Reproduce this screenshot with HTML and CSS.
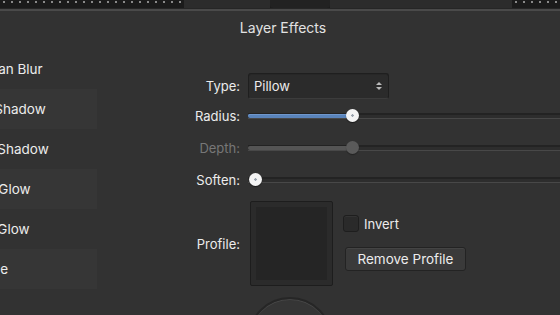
FILE: index.html
```html
<!DOCTYPE html>
<html lang="en">
<head>
  <meta charset="UTF-8">
  <title>Layer Effects</title>
  <link rel="stylesheet" href="styles.css">
</head>
<body>
<div class="topbar">
  <div class="seg dots left"></div>
  <div class="seg plain a"></div>
  <div class="seg tab"></div>
  <div class="seg plain b"></div>
  <div class="seg dots right"></div>
</div>

<div class="panel">
  <div class="title">Layer Effects</div>

  <div class="panel-body">
    <ul class="effects">
      <li class="blur">Gaussian Blur</li>
      <li class="alt outer">Outer Shadow</li>
      <li class="inner">Inner Shadow</li>
      <li class="alt outer-glow">Outer Glow</li>
      <li class="inner">Inner Glow</li>
      <li class="alt">Outline</li>
    </ul>

    <div class="settings">
      <div class="row row-type">
        <label class="lbl">Type:</label>
        <div class="select">
          <span>Pillow</span>
          <span class="arrows"><i class="up"></i><i class="down"></i></span>
        </div>
      </div>

      <div class="row row-slider">
        <label class="lbl">Radius:</label>
        <div class="slider">
          <div class="track"></div>
          <div class="fill blue" style="width: 105px"></div>
          <div class="knob" style="left: 98px"></div>
        </div>
      </div>

      <div class="row row-slider">
        <label class="lbl off">Depth:</label>
        <div class="slider disabled">
          <div class="track"></div>
          <div class="fill" style="width: 105px"></div>
          <div class="knob" style="left: 98px"></div>
        </div>
      </div>

      <div class="row row-slider">
        <label class="lbl">Soften:</label>
        <div class="slider">
          <div class="track"></div>
          <div class="knob" style="left: 1px"></div>
        </div>
      </div>

      <div class="row row-profile">
        <label class="lbl">Profile:</label>
        <div class="profile-ctrl">
          <div class="profile-box"><div class="profile-inner"></div></div>
          <div class="profile-side">
            <div class="check"><span class="box"></span>Invert</div>
            <button class="btn">Remove Profile</button>
          </div>
        </div>
      </div>

      <div class="row row-dial">
        <span></span>
        <div class="dial"></div>
      </div>
    </div>
  </div>
</div>
</body>
</html>
```

FILE: styles.css
```css
* {
  margin: 0;
  padding: 0;
  box-sizing: border-box;
}

html, body {
  width: 560px;
  height: 315px;
  overflow: hidden;
}

body {
  background: #323232;
  color: #ececec;
  font-family: 'Inter', 'Noto Sans', sans-serif;
  font-size: 13px;
}

/* Top strip */
.topbar {
  display: flex;
  height: 9px;
  background: #1c1c1c;
  border-bottom: 1px solid #262626;
}

.seg {
  height: 100%;
}

.dots {
  background-color: #1b1b1b;
  background-image: radial-gradient(circle at 4px 2px, #8a8a8a 0.8px, transparent 1.2px);
  background-size: 8px 8px;
}

.dots.left {
  width: 184px;
}

.dots.right {
  flex: 1;
}

.plain {
  background: #2c2c2c;
}

.plain.a {
  width: 86px;
}

.plain.b {
  width: 182px;
}

.tab {
  width: 60px;
  background: #222;
  border-radius: 0 0 3px 3px;
}

/* Panel */
.panel {
  border-top: 2px solid #4a4a4a;
}

.title {
  height: 38px;
  padding-bottom: 6px;
  display: flex;
  align-items: center;
  justify-content: center;
  font-size: 14px;
  color: #e2e2e2;
  padding-left: 6px;
}

.panel-body {
  display: flex;
}

/* Effect list, clipped at the window edge */
.effects {
  list-style: none;
  width: 97px;
  flex-shrink: 0;
  overflow: hidden;
}

.effects li {
  height: 40px;
  line-height: 40px;
  white-space: nowrap;
  text-indent: -37px;
  font-size: 13.5px;
}

.effects li.blur,
.effects li.outer {
  text-indent: -45px;
}

.effects li.inner {
  text-indent: -39px;
}

.effects li.outer-glow {
  text-indent: -41px;
}

.effects li.alt {
  background: #363636;
}

/* Settings grid */
.settings {
  flex: 1;
  padding-top: 24px;
}

.row {
  display: grid;
  grid-template-columns: 143px 1fr;
  column-gap: 8px;
  align-items: center;
}

.lbl {
  text-align: right;
  font-size: 13px;
  color: #ececec;
}

.lbl.off {
  color: #777;
}

.row-type {
  height: 26px;
}

.row-slider {
  height: 32px;
}

.row-type + .row-slider {
  margin-top: 1px;
}

.select {
  width: 141px;
  height: 26px;
  background: #2b2b2b;
  border: 1px solid #1f1f1f;
  border-bottom-color: #3c3c3c;
  border-radius: 3px;
  box-shadow: inset 0 1px 0 #272727;
  display: flex;
  align-items: center;
  justify-content: space-between;
  padding: 0 6px 0 5px;
  font-size: 13px;
}

.arrows {
  display: flex;
  flex-direction: column;
  gap: 2px;
}

.arrows i {
  width: 0;
  height: 0;
  border-left: 3px solid transparent;
  border-right: 3px solid transparent;
}

.arrows .up {
  border-bottom: 3px solid #bbb;
}

.arrows .down {
  border-top: 3px solid #bbb;
}

/* Sliders */
.slider {
  position: relative;
  height: 14px;
  width: 340px;
}

.track {
  position: absolute;
  left: 0;
  right: 0;
  top: 4px;
  height: 6px;
  background: #2d2d2d;
  border-top: 2px solid #232323;
  border-bottom: 1px solid #484848;
}

.fill {
  position: absolute;
  left: 0;
  top: 5px;
  height: 4px;
  border-radius: 2px;
  background: #555;
}

.fill.blue {
  background: #5a84bb;
  box-shadow: inset 0 1px 0 #6f97cc;
}

.knob {
  position: absolute;
  top: 0;
  width: 13px;
  height: 13px;
  border-radius: 50%;
  background: radial-gradient(circle, #9aa3ad 0 1px, #f4f4f4 1.5px);
  box-shadow: 0 1px 1px rgba(0, 0, 0, 0.5);
}

.slider.disabled .knob {
  background: #5a5a5a;
  box-shadow: 0 1px 1px rgba(0, 0, 0, 0.3);
}

/* Profile */
.row-profile {
  margin-top: 5px;
}

.profile-ctrl {
  display: flex;
  align-items: flex-start;
}

.profile-box {
  margin-left: 2px;
  width: 83px;
  height: 85px;
  padding: 5px;
  background: #2b2b2b;
  border: 1px solid #1d1d1d;
  border-radius: 2px;
}

.profile-inner {
  width: 100%;
  height: 100%;
  background: #252525;
}

.profile-side {
  display: flex;
  flex-direction: column;
  padding-top: 14px;
  margin-left: 10px;
}

.check {
  display: flex;
  align-items: center;
  gap: 5px;
  height: 17px;
  font-size: 13px;
}

.check .box {
  width: 16px;
  height: 17px;
  background: #2a2a2a;
  border: 1px solid #1e1e1e;
  border-radius: 3px;
  box-shadow: inset 0 1px 0 #333;
}

.btn {
  margin-top: 15px;
  margin-left: 2px;
  width: 121px;
  height: 24px;
  background: #3a3a3a;
  border: 1px solid #232323;
  border-radius: 3px;
  box-shadow: inset 0 1px 0 #444;
  color: #ececec;
  font-family: inherit;
  font-size: 13.5px;
}

/* Preview dial */
.row-dial {
  margin-top: 11px;
  align-items: start;
}

.dial {
  width: 84px;
  height: 84px;
  border-radius: 50%;
  background: #353535;
  border: 2px solid #262626;
  box-shadow: inset 0 1px 0 #474747;
}
```
